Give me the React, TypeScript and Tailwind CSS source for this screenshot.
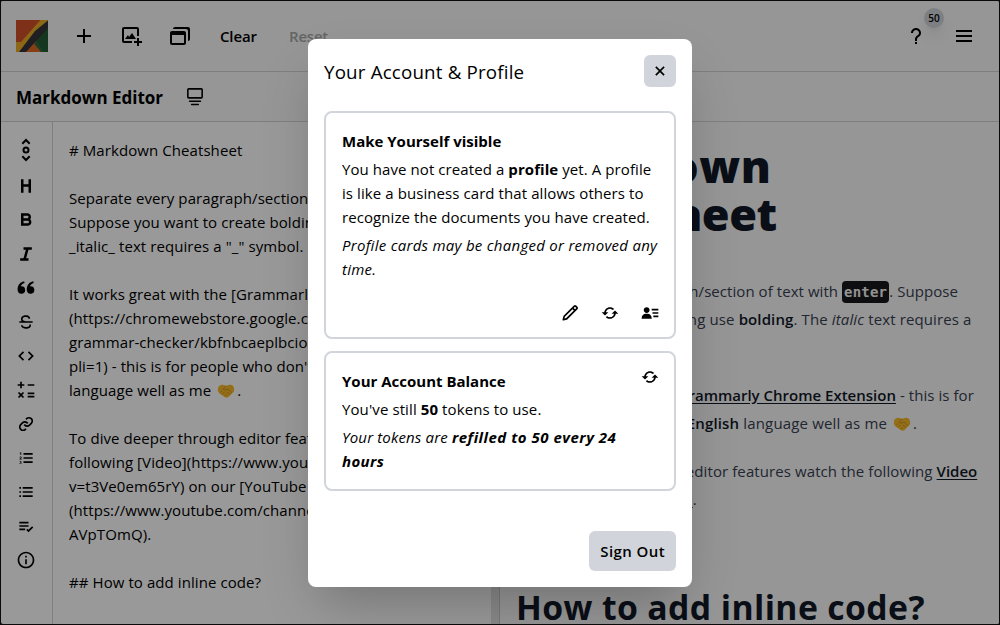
import type { ReactNode } from "react";
import {
  BiPlus, BiImageAdd, BiWindows, BiQuestionMark, BiMenu, BiHeading, BiBold, BiItalic,
  BiSolidQuoteAltLeft, BiStrikethrough, BiCode, BiMath, BiLink, BiListOl, BiListUl,
  BiListCheck, BiInfoCircle, BiPencil, BiRefresh, BiSolidUserDetail, BiX,
} from "react-icons/bi";

function Logo() {
  return (
    <svg viewBox="0 0 32 32" className="size-8 shrink-0">
      <rect width="32" height="32" fill="#d2502a" />
      <path d="M32 6v26H12z" fill="#2b6b3d" />
      <path d="M32 8v24h-4L19 19z" fill="#235c34" />
      <path d="M16.500 22L25 32H9z" fill="#e06a24" />
      <path d="M24.500 0H32v2L4 32H0V22h5z" fill="#eaac26" />
      <path d="M32 .5V8L10 32H3L19 11z" fill="#33333b" />
    </svg>
  );
}

function Handshake() {
  return (
    <svg viewBox="0 0 18 18" className="mx-[2px] inline-block size-[18px] align-[-4px]">
      <path d="M1 5.500Q3 2 5.500 2.800L9 3.800l3.500-1Q16 2.500 17 6q.8 3-1 4.500L11.500 15Q10 16.300 8 15.300L2.500 11.500Q0 8.500 1 5.500z" fill="#f7b92b" />
      <path d="M9 4L6.200 7.200l1.600 1L11 7l4 3.800M3.500 10l1.800-1.500M5.500 12l2-2M8 14l1.800-2M10 10l3 2.500" stroke="#cf8d1b" strokeWidth=".9" fill="none" />
    </svg>
  );
}

function SectionJump() {
  return (
    <svg viewBox="0 0 24 24" width="24" height="24" fill="none" stroke="currentColor" strokeWidth="2">
      <path d="M8.300 5.700L12 2l3.700 3.700M8.300 18.300L12 22l3.700-3.700" />
      <circle cx="12" cy="12" r="2.500" />
    </svg>
  );
}

function CardsView() {
  return (
    <svg viewBox="0 0 24 24" width="20" height="20" fill="none" stroke="currentColor" strokeWidth="1.900" strokeLinejoin="round" strokeLinecap="round">
      <rect x="3.400" y="2.200" width="17.200" height="10.800" rx="1" />
      <path d="M5.500 17h13M8 21h8" />
    </svg>
  );
}

const tools = [
  SectionJump, BiHeading, BiBold, BiItalic, BiSolidQuoteAltLeft, BiStrikethrough, BiCode,
  BiMath, BiLink, BiListOl, BiListUl, BiListCheck, BiInfoCircle,
];

const source: ReactNode[] = [
  "# Markdown Cheatsheet",
  "",
  "Separate every paragraph/section of text with `enter`.",
  "Suppose you want to create bolding use **bolding**. The",
  '_italic_ text requires a "_" symbol.',
  "",
  "It works great with the [Grammarly Chrome Extension]",
  "(https://chromewebstore.google.com/detail/grammarly-",
  "grammar-checker/kbfnbcaeplbcioakkpcpgfkobkghlhen?",
  "pli=1) - this is for people who don't know **English**",
  <>language well as me <Handshake />.</>,
  "",
  "To dive deeper through editor features watch the",
  "following [Video](https://www.youtube.com/watch?",
  "v=t3Ve0em65rY) on our [YouTube Channel]",
  "(https://www.youtube.com/channel/UCg3avsGct9zd_",
  "AVpTOmQ).",
  "",
  "## How to add inline code?",
];

function Strong({ children }: { children: ReactNode }) {
  return <strong className="font-semibold text-[#111827]">{children}</strong>;
}

function Anchor({ children }: { children: ReactNode }) {
  return <a className="font-semibold tracking-normal text-[#111827] underline underline-offset-2">{children}</a>;
}

function Preview() {
  return (
    <article className="flex-1 overflow-hidden bg-[#fafafa] pl-4 text-[15px] leading-7 tracking-[0.09px] whitespace-nowrap text-[#374151]">
      <h1 className="mt-5 text-[45px] leading-[48px] font-extrabold text-[#111827]">
        <div className="tracking-[0.55px]">Markdown</div>
        <div className="tracking-[-0.5px]">Cheatsheet</div>
      </h1>
      <div className="mt-[39px] space-y-5">
        <p>
          <span className="block h-7 tracking-[0.06px]">
            Separate every paragraph/section of text with{" "}
            <code className="rounded-[4px] bg-[#18181b] px-[2px] py-[3px] font-['DejaVu_Sans_Mono',monospace] text-[14px] font-bold tracking-[0.2px] text-[#f4f4f5]">enter</code>. Suppose
          </span>
          <span className="block h-7 tracking-[0.12px]">you want to create bolding use <Strong>bolding</Strong>. The <em>italic</em> text requires a</span>
          <span className="block h-7">"_" symbol.</span>
        </p>
        <p>
          <span className="block h-7 tracking-[0.06px]">It works great with the <Anchor>Grammarly Chrome Extension</Anchor> - this is for</span>
          <span className="block h-7 tracking-[0.16px]">people who don't know <Strong>English</Strong> language well as me <Handshake />.</span>
        </p>
        <p>
          <span className="block h-7">To dive deeper through editor features watch the following <Anchor>Video</Anchor></span>
          <span className="block h-7 tracking-[-0.1px]">on our <Anchor>YouTube Channel</Anchor>.</span>
        </p>
      </div>
      <h2 className="mt-[70px] text-[33.75px] leading-[48px] font-bold tracking-[0.38px] text-[#111827]">How to add inline code?</h2>
    </article>
  );
}

function Dialog() {
  return (
    <section className="flex h-[548px] w-96 flex-col rounded-lg bg-white p-4 text-[15px] leading-6 text-black shadow-2xl">
      <header className="flex items-center justify-between">
        <h2 className="pt-0.5 text-[18.75px] tracking-[0.17px] whitespace-nowrap">Your Account &amp; Profile</h2>
        <button className="flex size-8 items-center justify-center rounded-md bg-[#d1d5db]"><BiX size={20} /></button>
      </header>
      <div className="mt-6 flex h-[228px] flex-col rounded-lg border-2 border-[#d1d5db] p-4 whitespace-nowrap">
        <h3 className="font-bold">Make Yourself visible</h3>
        <p className="mt-1 tracking-[0.08px]">
          <span className="block">You have not created a <strong>profile</strong> yet. A profile</span>
          <span className="block">is like a business card that allows others to</span>
          <span className="block">recognize the documents you have created.</span>
        </p>
        <p className="mt-1 tracking-[0.27px] italic">
          <span className="block">Profile cards may be changed or removed any</span>
          <span className="block">time.</span>
        </p>
        <div className="mt-[22px] -mr-0.5 flex justify-end gap-5 text-black">
          <BiPencil size={20} /><BiRefresh size={20} /><BiSolidUserDetail size={20} />
        </div>
      </div>
      <div className="mt-3 flex h-[140px] justify-between rounded-lg border-2 border-[#d1d5db] p-4 whitespace-nowrap">
        <div>
          <h3 className="font-bold">Your Account Balance</h3>
          <p className="mt-1 tracking-[0.1px]">You've still <strong>50</strong> tokens to use.</p>
          <p className="mt-1 tracking-[0.37px] italic">
            <span className="block"><span className="tracking-[0.15px]">Your tokens are </span><strong className="tracking-[0.5px]">refilled to 50 every 24</strong></span>
            <strong className="block">hours</strong>
          </p>
        </div>
        <BiRefresh size={20} className="-mt-0.5 -mr-0.5" />
      </div>
      <button className="mt-auto h-10 self-end rounded-md bg-[#d1d5db] px-[11px] font-semibold tracking-[0.4px]">Sign Out</button>
    </section>
  );
}

export default function App() {
  return (
    <div className="relative h-[625px] w-[1000px] overflow-hidden bg-[#111] p-px font-['Open_Sans','Noto_Sans',sans-serif] text-black">
      <div className="flex h-[623px] w-[998px] flex-col overflow-hidden rounded-[2px] bg-white">
        <header className="flex h-[71px] shrink-0 items-center border-b border-[#d4d4d8] bg-[#fafafa] pl-[15px] text-[15px] font-semibold">
          <Logo />
          <BiPlus size={24} className="ml-6" />
          <BiImageAdd size={24} className="ml-6" />
          <BiWindows size={24} className="ml-6" />
          <span className="ml-7 w-[37px] tracking-[-0.15px]">Clear</span>
          <span className="ml-8 tracking-[-0.2px] text-[#a8a8a8]">Reset</span>
          <div className="relative mr-6 ml-auto">
            <BiQuestionMark size={24} />
            <span className="absolute -top-4 left-5 flex size-5 items-center justify-center rounded-full bg-[#d1d5db] text-[10px] shadow-lg">50</span>
          </div>
          <BiMenu size={24} className="mr-[23px]" />
        </header>
        <div className="flex h-[50px] shrink-0 items-center border-b border-[#d4d4d8] bg-[#fafafa] pl-[15px]">
          <h1 className="pt-0.5 text-[17px] font-bold whitespace-nowrap">Markdown Editor</h1>
          <span className="ml-[22px]"><CardsView /></span>
        </div>
        <div className="flex min-h-0 flex-1">
          <nav className="flex w-[52px] shrink-0 flex-col items-center border-r border-[#d4d4d8] pt-4 pr-px">
            {tools.map((Tool, i) => (
              <div key={i} className={i === 0 ? "mb-[7px] flex h-6 items-center" : "flex h-[34px] items-center"}>
                <Tool size={20} />
              </div>
            ))}
          </nav>
          <div className="w-[438px] shrink-0 overflow-hidden pt-4 pl-4 text-[15px] leading-6 tracking-[0.08px] whitespace-nowrap">
            {source.map((line, i) => <div key={i} className="h-6">{line}</div>)}
          </div>
          <div className="w-[9px] shrink-0 border-r border-[#c8c8cc] bg-[#e4e4e7]" />
          <Preview />
        </div>
      </div>
      <div className="absolute inset-0 flex items-start justify-center bg-black/40 pt-[39px]">
        <Dialog />
      </div>
    </div>
  );
}
